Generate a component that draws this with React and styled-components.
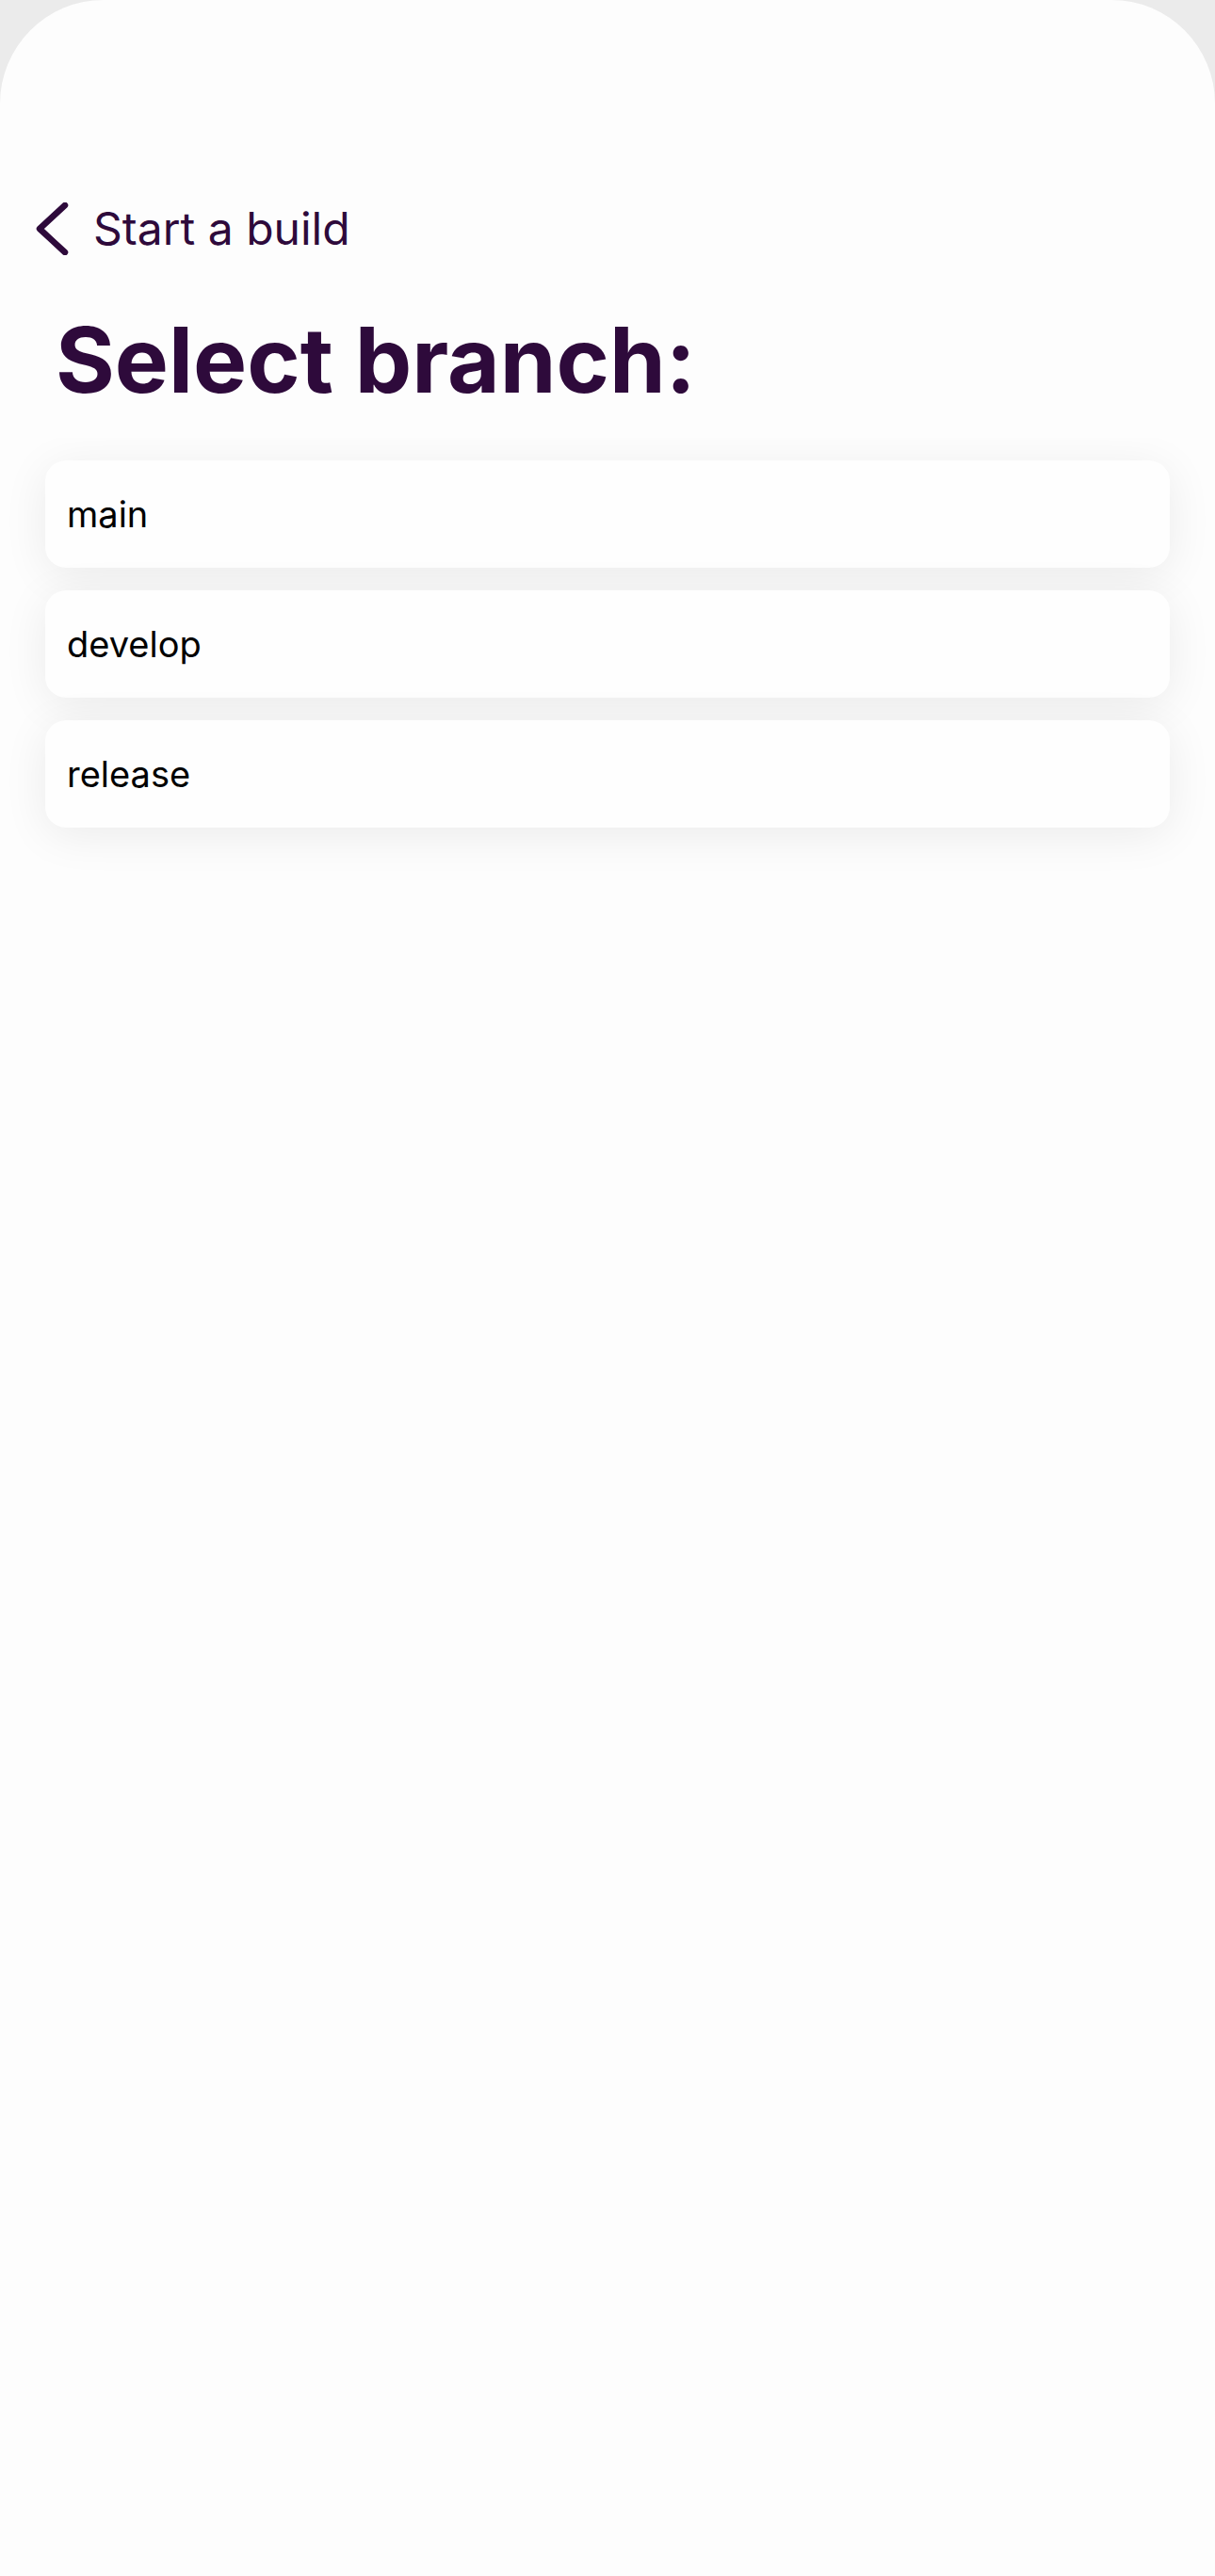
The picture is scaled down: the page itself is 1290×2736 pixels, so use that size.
import React from "react";
import styled, { createGlobalStyle } from "styled-components";

const GlobalStyle = createGlobalStyle`
  html, body {
    margin: 0;
    padding: 0;
    background: #ebebeb;
  }
  body {
    font-family: Inter, "Noto Sans", "Liberation Sans", sans-serif;
    -webkit-font-smoothing: antialiased;
  }
`;

const Screen = styled.div`
  min-height: 2736px;
  background: #fdfdfd;
  border-top-left-radius: 110px;
  border-top-right-radius: 110px;
  padding-top: 215px;
  box-sizing: border-box;
`;

const NavRow = styled.button`
  display: flex;
  align-items: center;
  gap: 25px;
  height: 56px;
  margin: 0 0 0 34px;
  padding: 0;
  border: none;
  background: none;
  cursor: pointer;
  color: #2e0a3b;
`;

const NavLabel = styled.span`
  font-family: Inter, sans-serif;
  font-size: 48px;
  line-height: 56px;
  font-weight: 400;
  color: #2e0a3b;
`;

const Title = styled.h1`
  margin: 53px 0 0 59px;
  font-family: Inter, sans-serif;
  font-size: 96px;
  line-height: 116px;
  font-weight: 700;
  color: #2e0a3b;
`;

const BranchList = styled.div`
  margin-top: 25px;
  overflow: hidden;
  display: flex;
  flex-direction: column;
  gap: 24px;
  padding: 24px 48px 70px;
`;

const BranchCard = styled.button`
  display: flex;
  align-items: center;
  height: 114px;
  padding: 0 0 0 23px;
  border: none;
  border-radius: 22px;
  background: #fefefe;
  box-shadow: 0 8px 48px rgba(0, 0, 0, 0.075);
  font-family: Inter, sans-serif;
  font-size: 38px;
  font-weight: 400;
  color: #000;
  text-align: left;
  cursor: pointer;
`;

const ChevronLeft = () => (
  <svg width="40" height="56" viewBox="0 0 40 56" fill="none">
    <polyline
      points="35,3 8,28 35,53"
      stroke="#2e0a3b"
      strokeWidth="6.5"
      strokeLinecap="round"
      strokeLinejoin="round"
    />
  </svg>
);

const branches = ["main", "develop", "release"];

export default function App() {
  return (
    <>
      <GlobalStyle />
      <Screen>
        <NavRow>
          <ChevronLeft />
          <NavLabel>Start a build</NavLabel>
        </NavRow>
        <Title>Select branch:</Title>
        <BranchList>
          {branches.map((b) => (
            <BranchCard key={b}>{b}</BranchCard>
          ))}
        </BranchList>
      </Screen>
    </>
  );
}
